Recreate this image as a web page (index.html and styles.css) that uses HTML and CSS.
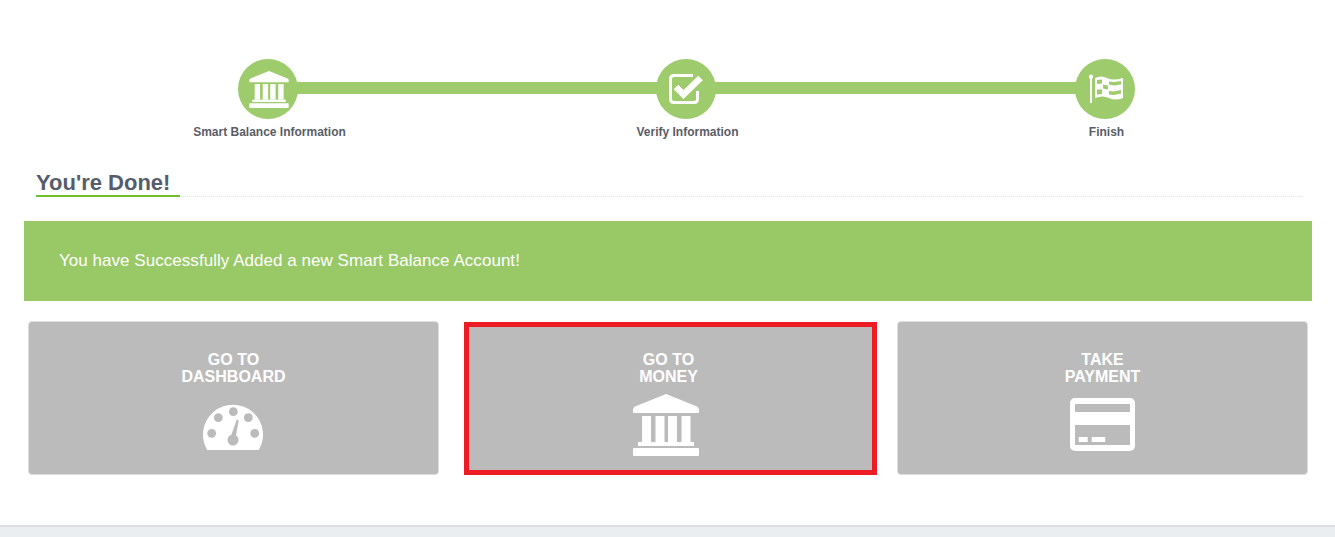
FILE: index.html
```html
<!DOCTYPE html>
<html lang="en">
<head>
  <meta charset="UTF-8" />
  <title>Smart Balance - Finish</title>
  <link rel="stylesheet" href="styles.css">
</head>
<body>
  <svg class="defs" width="0" height="0">
    <symbol id="bank" viewBox="0 0 66 62">
      <path d="M33 0 L64 12.500 Q66 13.500 66 16 V18 Q66 19 65 19 H1 Q0 19 0 18 V16 Q0 13.500 2 12.500 Z" />
      <rect x="9" y="22" width="9" height="26" />
      <rect x="22.500" y="22" width="9" height="26" />
      <rect x="35" y="22" width="9" height="26" />
      <rect x="48.500" y="22" width="9" height="26" />
      <rect x="5" y="48" width="56" height="4" />
      <rect x="0" y="54" width="66" height="8" rx="1" />
    </symbol>
  </svg>

  <div class="wizard">
    <div class="steps">
      <div class="step-line"></div>
      <div class="step">
        <div class="step-icon">
          <svg class="icon-bank-small"><use href="#bank" /></svg>
        </div>
        <div class="step-label">Smart Balance Information</div>
      </div>
      <div class="step step-middle">
        <div class="step-icon">
          <svg class="icon-step" viewBox="0 0 36 30">
            <path d="M24 1.500 H5 Q1.500 1.500 1.500 5 V25 Q1.500 28.500 5 28.500 H25 Q28.500 28.500 28.500 25 V17" fill="none" stroke="#fff" stroke-width="3" />
            <path d="M7 13 L14.500 20.500 L31.500 4" fill="none" stroke="#fff" stroke-width="6.500" />
          </svg>
        </div>
        <div class="step-label">Verify Information</div>
      </div>
      <div class="step">
        <div class="step-icon">
          <svg class="icon-step" viewBox="0 0 36 30">
            <circle cx="3" cy="2.800" r="2.200" fill="#fff" />
            <rect x="2" y="3" width="2" height="26" fill="#fff" />
            <path d="M7 4 Q13 1 19 4 T35 4 V24 Q27 27 21 24 T7 24 Z" fill="#fff" />
            <path d="M9 6 L14 5.500 V9.500 L9 10 Z M21 7.500 L26 8 L33 7 V10.500 L26 11.500 L21 10.500 Z M15 10.500 L20 11.500 V15.500 L15 14.500 Z M9 15.500 L14 15.500 V20 L9 20.500 Z M21 17 L26 17.500 L33 16 V19.500 L26 21 L21 20.500 Z" fill="#9ecb6c" />
          </svg>
        </div>
        <div class="step-label">Finish</div>
      </div>
    </div>

    <div class="section-title">
      <h2>You're Done!</h2>
    </div>

    <div class="banner">You have Successfully Added a new Smart Balance Account!</div>

    <div class="cards">
      <a class="card">
        <span class="card-text">GO TO<br>DASHBOARD</span>
        <svg class="icon-gauge" viewBox="0 0 60 47">
          <path d="M4.200 47 A30 30 0 1 1 55.800 47 Z" fill="#fff" />
          <g fill="#bbb">
            <circle cx="30.300" cy="8.700" r="4.400" />
            <circle cx="15.300" cy="14.700" r="4.400" />
            <circle cx="45.300" cy="14.700" r="4.400" />
            <circle cx="8.700" cy="30.300" r="4.400" />
            <circle cx="51.700" cy="30.300" r="4.400" />
            <circle cx="30" cy="37" r="5.500" />
            <path d="M28 33 L33.500 17 Q35.300 16 35.700 18 L32.500 35 Z" />
          </g>
        </svg>
      </a>
      <a class="card card-selected">
        <span class="card-text">GO TO<br>MONEY</span>
        <svg class="icon-bank"><use href="#bank" /></svg>
      </a>
      <a class="card">
        <span class="card-text">TAKE<br>PAYMENT</span>
        <svg class="icon-payment" viewBox="0 0 65 53">
          <rect width="65" height="53" rx="5" fill="#fff" />
          <rect x="5" y="6" width="55" height="8" fill="#bbb" />
          <rect x="5" y="27" width="55" height="20" fill="#bbb" />
          <rect x="8.700" y="39" width="9" height="5" fill="#fff" />
          <rect x="21.700" y="39" width="13.500" height="5" fill="#fff" />
        </svg>
      </a>
    </div>
  </div>

  <div class="footer"></div>
</body>
</html>
```

FILE: styles.css
```css
* {
  box-sizing: border-box;
  margin: 0; padding: 0;
}
body {
  font-family: "Liberation Sans", Arial, sans-serif;
  background: #fff;
  height: 537px;
  overflow: hidden;
}
.defs {
  position: absolute;
}
.wizard {
  height: 525px;
  padding-top: 59px;
}
.steps {
  position: relative;
  display: flex;
  justify-content: space-between;
  margin-left: 188px;
  margin-right: 150px;
}
.step-line {
  position: absolute;
  top: 23px;
  left: 80px;
  right: 80px;
  height: 12px;
  background: #9ecb6c;
}
.step {
  position: relative;
  width: 160px;
  display: flex;
  flex-direction: column;
  align-items: center;
}
.step-middle {
  margin-right: 1px;
}
.step-icon {
  width: 60px;
  height: 60px;
  border-radius: 50%;
  background: #9ecb6c;
  display: flex;
  align-items: center;
  justify-content: center;
}
.icon-bank-small {
  width: 40px;
  height: 37px;
  fill: #fff;
  margin-top: 1px;
  margin-left: 2px;
}
.icon-step {
  width: 36px;
  height: 30px;
  margin-left: 1px;
}
.step-label {
  margin-top: 6px;
  padding-left: 3px;
  font-size: 12px;
  line-height: 15px;
  font-weight: bold;
  color: #5a5d66;
  white-space: nowrap;
}
.section-title {
  margin: 30px 33px 0 36px;
  height: 27px;
  border-bottom: 1px dotted #e3e3e3;
}
.section-title h2 {
  display: inline-block;
  vertical-align: top;
  width: 144px;
  height: 27px;
  border-bottom: 2px solid #6fbe2e;
  font-size: 22px;
  line-height: 25px;
  font-weight: bold;
  color: #555d6b;
}
.banner {
  margin: 24px 23px 0 24px;
  height: 80px;
  padding-left: 35px;
  background: #99c866;
  color: #fff;
  font-size: 17px;
  letter-spacing: 0.04px;
  line-height: 80px;
}
.cards {
  display: flex;
  align-items: flex-end;
  gap: 20px;
  margin: 20px 0 0 28px;
}
.card {
  width: 411px;
  height: 154px;
  display: flex;
  flex-direction: column;
  align-items: center;
  padding-top: 29px;
  background: #bbb;
  border: 1px solid #ddd;
  border-radius: 4px;
  color: #fff;
}
.card:first-child {
  margin-right: 5px;
}
.card-selected {
  width: 413px;
  height: 153px;
  padding-top: 24px;
  padding-right: 4px;
  border: 5px solid #ed1c24;
  border-radius: 0;
}
.card-text {
  font-size: 16px;
  line-height: 17px;
  font-weight: bold;
  text-align: center;
}
.icon-gauge {
  width: 60px;
  height: 47px;
  margin-top: 18px;
  margin-right: 2px;
}
.icon-bank {
  width: 66px;
  height: 62px;
  fill: #fff;
  margin-top: 9px;
  margin-right: 6px;
}
.icon-payment {
  width: 65px;
  height: 53px;
  margin-top: 13px;
}
.footer {
  height: 12px;
  background: #ebeef1;
  border-top: 2px solid #ddd;
}
```
